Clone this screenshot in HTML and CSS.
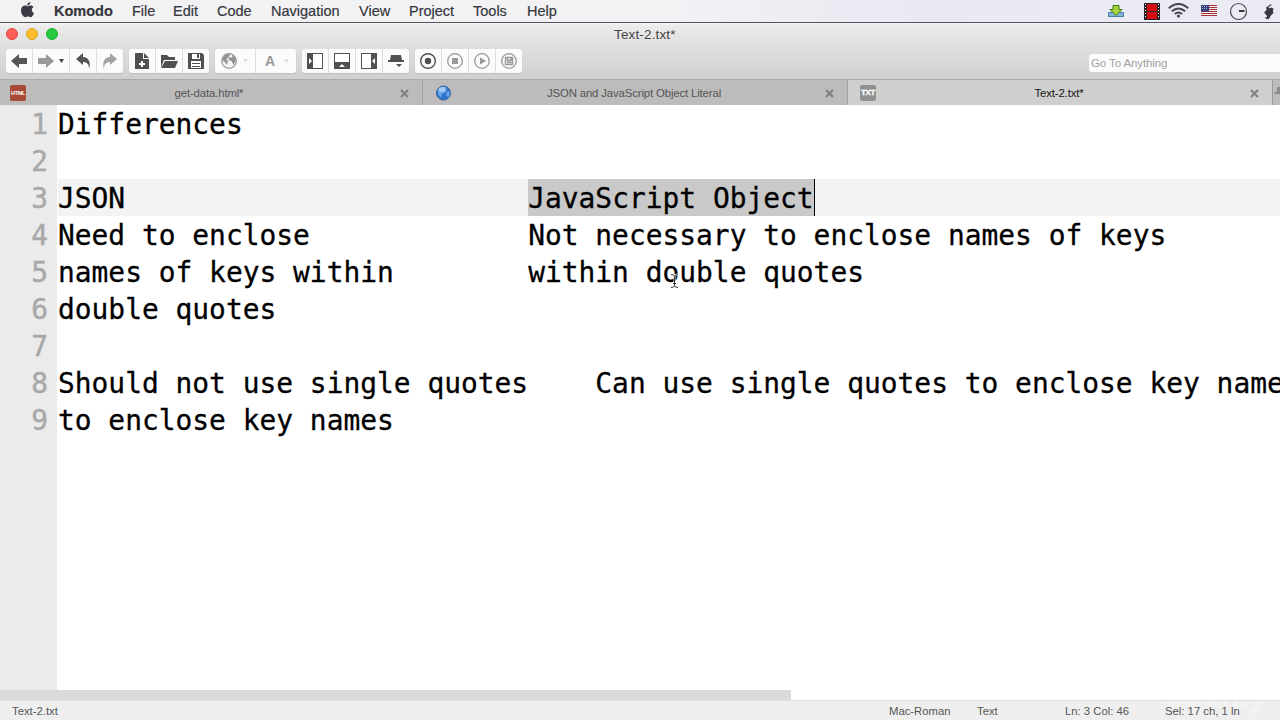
FILE: index.html
```html
<!DOCTYPE html>
<html lang="en">
<head>
<meta charset="utf-8">
<title>Text-2.txt*</title>
<link rel="stylesheet" href="styles.css">
</head>
<body>
<div class="screen">
  <header class="menubar">
    <nav class="menus">
      <span><svg class="apple" width="15" height="18" viewBox="0 0 15 18"><path fill="#3a3b42" d="M10.300 1c.1 1.800-1.300 3.500-3.100 3.500C7 2.800 8.500 1.200 10.300 1zM7.700 5.300c.6 0 1.500-.8 2.900-.8 1.200 0 2.200.5 2.900 1.500-2.500 1.500-2.100 4.800.5 5.900-.8 2.300-2.100 4.300-3.500 4.300-1 0-1.400-.6-2.600-.6s-1.700.6-2.600.6C3.300 16.200 1 13 1 9.600c0-3.100 2-5 4-5 1.200 0 2 .7 2.700.7z"/></svg></span>
      <b>Komodo</b><span>File</span><span>Edit</span><span>Code</span><span>Navigation</span><span>View</span><span>Project</span><span>Tools</span><span>Help</span>
    </nav>
    <svg class="tray" width="180" height="22" viewBox="0 0 180 22">
      <path fill="#84b4d6" stroke="#477aa0" d="M8.500 12.500h15v4h-15z"/><path fill="#a5d43b" stroke="#3b7b16" d="M13 5.500h6v4h3l-6 6-6-6h3z"/>
      <path fill="#2b2024" d="M44 3h16v17H44z"/><path fill="#d40d14" d="M47 4h10v7H47zm0 8h10v7H47z"/><path stroke="#eee" stroke-dasharray="1 2" d="M45.500 4v15M58.500 4v15"/>
      <g fill="none" stroke="#43444c" stroke-width="1.900"><path d="M68.800 8.200q9.700-8.400 19.400 0M71.800 11.300q6.700-5.800 13.400 0M74.800 14q3.700-3.200 7.400 0"/></g><circle cx="78.500" cy="16" r="1.600" fill="#43444c"/>
      <path fill="#eee" d="M101 5h16v11h-16z"/><path stroke="#a8313e" d="M101 5.500h16m-16 2h16m-16 2h16m-16 2h16m-16 2h16m-16 2h16"/><path fill="#34417c" d="M101 5h8v6.500h-8z"/><path stroke="#aab2d3" stroke-dasharray="1 1" d="M102 6.500h6m-6 2h6"/>
      <circle cx="138.500" cy="11.500" r="8" fill="none" stroke="#484951" stroke-width="1.200"/><path stroke="#222" stroke-width="1.800" d="M139 11h5.500"/>
      <path fill="#393a42" d="m171 4-3.500 2.500-1.700 1.300 1 1.700-2.700 3 3 3.500-.2 1.200-2-.2 1.500 2.200c2 .3 3.800-1 3.800-3l3.500-3.500-1-1.500 1-2.500-2.200-1.200-2 .8-1.200-1.300 3.200-1.800z"/>
    </svg>
  </header>
  <section class="chrome">
    <div class="titlebar"><div class="lights"><i class="red"></i><i class="yellow"></i><i class="green"></i></div><span class="window-title">Text-2.txt*</span></div>
    <div class="toolbar">
      <div class="group">
        <span class="btn"><svg width="26" height="24" viewBox="0 0 26 24"><path fill="#555" d="m5 12 8-7v4h8v6h-8v4z"/></svg></span>
        <span class="btn wide"><svg width="36" height="24" viewBox="0 0 36 24"><path fill="#999" d="m21 12-8-7v4H5v6h8v4z"/><path fill="#444" d="M26 10h5l-2.500 4z"/></svg></span>
        <span class="btn"><svg width="26" height="24" viewBox="0 0 26 24"><path fill="#555" d="m6 10 7-6v4c6 0 8 6 6 12 0-5-2-7-6-7v3z"/></svg></span>
        <span class="btn"><svg width="26" height="24" viewBox="0 0 26 24"><path fill="#a2a2a2" d="m20 10-7-6v4c-6 0-8 6-6 12 0-5 2-7 6-7v3z"/></svg></span>
      </div>
      <div class="group">
        <span class="btn"><svg width="26" height="24" viewBox="0 0 26 24"><path fill="#505050" d="M6 4h8v6h6v10H6z"/><path fill="#505050" d="m15 4 5 5h-5z"/><path stroke="#fff" stroke-width="2" d="M10 15h6m-3-3v6"/></svg></span>
        <span class="btn"><svg width="26" height="24" viewBox="0 0 26 24"><path fill="#505050" d="M5 6h6l2 2h6v3H8l-3 7z"/><path fill="#505050" d="M9 12h13l-3 7H5z"/></svg></span>
        <span class="btn"><svg width="26" height="24" viewBox="0 0 26 24"><path fill="#505050" d="M5 4h14l2 2v14H5z"/><path fill="#fff" d="M9 5h8v5H9zm-1 7h10v7H8z"/><path fill="#505050" d="M14 5h2v4h-2zM9 14h8v1H9zm0 3h8v1H9z"/></svg></span>
      </div>
      <div class="group">
        <span class="btn menu"><svg width="40" height="24" viewBox="0 0 40 24"><circle cx="14" cy="12" r="7.300" fill="#f4f4f4" stroke="#999" stroke-width="1.300"/><path fill="#919191" d="M8 9q2-4 6-4l1 2-2 1 1 1-3 1 2 2-1 4-2-3-2-1zm9-3q4 2 3.500 6l-2 4-2-4-3-1 1-3 3 1z"/><path fill="#ddd" d="M28 10h5l-2.500 4z"/></svg></span>
        <span class="btn menu"><span class="letter">A</span><svg width="10" height="24" viewBox="0 0 10 24"><path fill="#ddd" d="M0 10h5l-2.500 4z"/></svg></span>
      </div>
      <div class="group">
        <span class="btn"><svg width="26" height="24" viewBox="0 0 26 24"><path fill="#505050" d="M5 4h16v16H5z"/><path fill="#fff" d="M11 5h9v14h-9zM7 9l3 3-3 3z"/></svg></span>
        <span class="btn"><svg width="26" height="24" viewBox="0 0 26 24"><path fill="#505050" d="M5 4h16v16H5z"/><path fill="#fff" d="M6 5h14v8H6zm4 13 3-3 3 3z"/></svg></span>
        <span class="btn"><svg width="26" height="24" viewBox="0 0 26 24"><path fill="#505050" d="M5 4h16v16H5z"/><path fill="#fff" d="M6 5h9v14H6zm13 4-3 3 3 3z"/></svg></span>
        <span class="btn"><svg width="26" height="24" viewBox="0 0 26 24"><path fill="#505050" d="M8 6h10l1 5h2v2H5v-2h2zm5 9h6l-3 3z"/></svg></span>
      </div>
      <div class="group">
        <span class="btn"><svg width="26" height="24" viewBox="0 0 26 24"><circle cx="13" cy="12" r="7.300" fill="none" stroke="#505050" stroke-width="1.400"/><circle cx="13" cy="12" r="3.200" fill="#505050"/></svg></span>
        <span class="btn"><svg width="26" height="24" viewBox="0 0 26 24"><circle cx="13" cy="12" r="7.300" fill="none" stroke="#999" stroke-width="1.300"/><path fill="#999" d="M10 9h6v6h-6z"/></svg></span>
        <span class="btn"><svg width="26" height="24" viewBox="0 0 26 24"><circle cx="13" cy="12" r="7.300" fill="none" stroke="#999" stroke-width="1.300"/><path fill="#999" d="m11 8.500 6 3.500-6 3.500z"/></svg></span>
        <span class="btn"><svg width="26" height="24" viewBox="0 0 26 24"><circle cx="13" cy="12" r="7.300" fill="none" stroke="#999" stroke-width="1.300"/><path fill="none" stroke="#999" stroke-width="1.400" d="M9.500 8.500h7v7h-7zm2 0v3h3.500v-3M11 13.500h4.500"/></svg></span>
      </div>
      <div class="search">Go To Anything</div>
    </div>
    <div class="tabs">
      <div class="tab"><span class="badge html">HTML</span><span class="name n1">get-data.html*</span><svg class="close" width="9" height="9" viewBox="0 0 9 9"><path d="m1 1 7 7m0-7-7 7"/></svg></div>
      <div class="tab"><svg width="16" height="16" viewBox="0 0 16 16"><circle cx="7.500" cy="8" r="7" fill="#2e70cb" stroke="#3a659f"/><path fill="#6aa5e6" d="M2 5q3-4 8-3L8 5l2 2-4 2-1 4-3-4zm9 1 3 1-1 5-3-1z"/><ellipse cx="6.500" cy="4.500" rx="4" ry="2.500" fill="#c8e4ff" opacity=".6"/></svg><span class="name n2">JSON and JavaScript Object Literal</span><svg class="close" width="9" height="9" viewBox="0 0 9 9"><path d="m1 1 7 7m0-7-7 7"/></svg></div>
      <div class="tab active"><span class="badge txt">TXT</span><span class="name n3">Text-2.txt*</span><svg class="close" width="9" height="9" viewBox="0 0 9 9"><path d="m1 1 7 7m0-7-7 7"/></svg></div>
      <div class="more"><svg width="7" height="24" viewBox="0 0 7 24"><path fill="#8d8d8d" d="M1 13.500 4 11V7h3v7H1z"/></svg></div>
    </div>
  </section>
  <main class="editor">
    <div class="gutter"><div>1</div><div>2</div><div>3</div><div>4</div><div>5</div><div>6</div><div>7</div><div>8</div><div>9</div></div>
    <div class="code">
      <div class="line">Differences</div>
      <div class="line"></div>
      <div class="line current">JSON                        <span class="selected">JavaScript Object</span></div>
      <div class="line">Need to enclose             Not necessary to enclose names of keys</div>
      <div class="line">names of keys within        within double quotes</div>
      <div class="line">double quotes</div>
      <div class="line"></div>
      <div class="line">Should not use single quotes    Can use single quotes to enclose key name</div>
      <div class="line">to enclose key names</div>
      <div class="scroll"></div>
    </div>
    <svg class="pointer" width="9" height="16" viewBox="0 0 9 16"><path fill="none" stroke="#fff" stroke-width="2" d="M1 1.500q3.500 0 3.500 2v9q0 2-3.500 2m7-13q-3.500 0-3.500 2m3.500 11q-3.500 0-3.500-2M3 10.500h3"/><path fill="none" stroke="#333" d="M1 1.500q3.500 0 3.500 2v9q0 2-3.500 2m7-13q-3.500 0-3.500 2m3.500 11q-3.500 0-3.500-2M3 10.500h3"/></svg>
  </main>
  <footer class="status"><span>Text-2.txt</span><span>Mac-Roman</span><span>Text</span><span>Ln: 3 Col: 46</span><span>Sel: 17 ch, 1 ln</span><em class="watermark">udemy</em></footer>
</div>
</body>
</html>
```

FILE: styles.css
```css
* { box-sizing: border-box; }
body { margin: 0; font-family: "Liberation Sans", Arial, sans-serif; }
svg { display: block; flex: none; }
.screen { width: 1280px; height: 720px; overflow: hidden; display: flex; flex-direction: column; background: #fff; }
.menubar { height: 23px; flex: none; display: flex; justify-content: space-between; background: linear-gradient(90deg, #f2f2f3, #f3f3f5 50%, #e8e9f2 72%, #ebebf3); border-bottom: 1px solid #555660; color: #36373d; font-size: 14.5px; line-height: 22px; -webkit-text-stroke: .2px; }
.menus { display: grid; grid-template-columns: 34px 78px 41px 44px 54px 88px 50px 64px 54px 60px; padding-left: 20px; white-space: nowrap; }
.apple { margin-top: 1px; }
.chrome { height: 82px; flex: none; display: flex; flex-direction: column; background: linear-gradient(#f2f2f2, #eaeaea 4px, #cfcfcf 56px); }
.titlebar { display: grid; grid-template-columns: 614px 1fr; height: 26px; }
.lights { display: flex; gap: 8px; padding: 5px 0 0 6px; }
.lights i { width: 12px; height: 12px; border-radius: 50%; border: 1px solid #e2463f; background: #ff5f57; }
.lights .yellow { border-color: #dfa023; background: #ffbd2e; }
.lights .green { border-color: #1dad2b; background: #28c940; }
.window-title { color: #454545; font-size: 13.5px; line-height: 23px; letter-spacing: .15px; }
.toolbar { height: 30px; display: flex; padding-left: 6px; gap: 6px; }
.group { display: flex; height: 24px; gap: 1px; border-radius: 3px; overflow: hidden; background: #ddd; box-shadow: 0 1px 1px #bbb; }
.btn { display: flex; width: 26px; background: #fbfbfb; }
.wide { width: 36px; }
.menu { width: 40px; }
.letter { width: 28px; text-align: center; font: bold 14px/25px "Liberation Sans", Arial, sans-serif; color: #999; }
.search { margin: 5px 0 0 auto; width: 191px; height: 18px; padding-left: 2px; border-radius: 3px 0 0 3px; background: #fbfbfb; color: #a2a2a2; font-size: 11.5px; line-height: 18px; letter-spacing: -.1px; }
.tabs { height: 26px; display: grid; grid-template-columns: 422px 425px 425px 8px; border-top: 1px solid #aaa; background: #bcbcbc; }
.tab { display: flex; align-items: center; padding: 1px 18px 0 10px; }
.tab + .tab { border-left: 1px solid #a4a4a4; padding-left: 13px; }
.tab + .tab.active { background: #cfcfcf; padding-left: 12px; }
.name { flex: 1; text-align: center; font-size: 11.4px; line-height: 24px; letter-spacing: -.15px; color: #555; white-space: nowrap; }
.n1 { padding-right: 8px; }
.n2 { padding-right: 9px; }
.n3 { padding-right: 8px; color: #161616; }
.tab .close { margin-right: -5px; }
.close path { stroke: #7e7e7e; stroke-width: 2; fill: none; }
.badge { width: 16px; height: 16px; border-radius: 2px; color: #fff; text-align: center; font-weight: bold; line-height: 16px; letter-spacing: -.3px; }
.html { background: #a74935; font-size: 5.5px; }
.txt { background: #919191; font-size: 8px; -webkit-text-stroke: .3px; }
.more { border-left: 1px solid #999; }
.editor { flex: 1; min-height: 0; display: grid; grid-template-columns: 57px 1223px; position: relative; background: #fff; font: 27.900px/39px "DejaVu Sans Mono", monospace; overflow: hidden; }
.gutter { display: grid; grid-auto-rows: 37px; align-content: start; background: #ebebeb; color: #a8a8a8; text-align: right; padding-right: 9px; margin-bottom: 10px; -webkit-text-stroke: .4px; }
.code { display: flex; flex-direction: column; overflow: hidden; color: #000; white-space: pre; -webkit-text-stroke: .3px; }
.line { height: 37px; flex: none; margin-left: 1px; }
.current { background: #f3f3f3; overflow: hidden; }
.selected { display: inline-block; height: 39px; background: #c9c9c9; border-right: 1px solid #000; }
.scroll { margin-top: auto; width: 734px; height: 10px; flex: none; background: #dadada; }
.editor::after { content: ""; position: absolute; left: 0; bottom: 0; width: 57px; height: 10px; background: #dadada; }
.pointer { position: absolute; left: 670px; top: 168px; }
.status { position: relative; height: 20px; flex: none; border-top: 1px solid #ddd; background: #efefef; display: grid; grid-template-columns: 877px 88px 88px 100px 115px; padding-left: 12px; color: #555; font-size: 11.3px; line-height: 21px; white-space: nowrap; overflow: hidden; }
.watermark { position: absolute; left: 1164px; top: -22px; font: bold 32px/32px "Liberation Sans", Arial, sans-serif; color: #fff; opacity: .35; }
```
